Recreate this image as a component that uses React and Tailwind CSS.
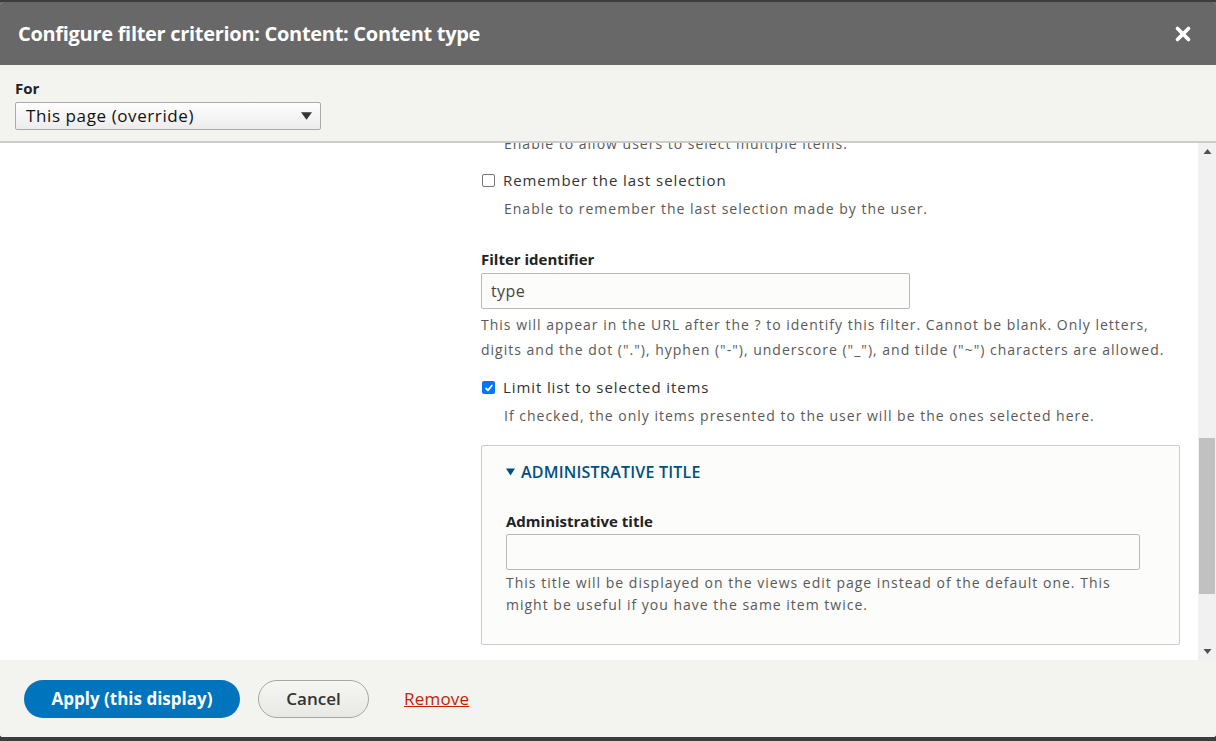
import { X } from 'lucide-react'

const font = { fontFamily: '"Open Sans", "Liberation Sans", sans-serif' }

function Checkbox({ checked }) {
  if (checked) {
    return (
      <span className="mt-[1px] flex h-[13px] w-[13px] shrink-0 items-center justify-center rounded-[2px] bg-[#0075ff]">
        <svg viewBox="0 0 12 12" className="h-[10px] w-[10px]" fill="none" stroke="white" strokeWidth="2.2" strokeLinecap="round" strokeLinejoin="round">
          <path d="M2.5 6.5l2.2 2.3L9.5 3" />
        </svg>
      </span>
    )
  }
  return <span className="mt-[1px] h-[13px] w-[13px] shrink-0 rounded-[2px] border border-[#767676] bg-white" />
}

function CheckItem({ checked, label, help }) {
  return (
    <div>
      <div className="flex items-center gap-[8px] pl-[1px] text-[15px] leading-[24px] tracking-[0.9px] text-[#333]">
        <Checkbox checked={checked} />
        <span>{label}</span>
      </div>
      <p className="mt-[7px] pl-[23px] text-[14px] leading-[20px] tracking-[1px] text-[#595959]">{help}</p>
    </div>
  )
}

export default function App() {
  return (
    <div className="h-[741px] w-[1216px] overflow-hidden bg-[#3d3d3d] pt-[2px]" style={font}>
      <div className="flex h-[735px] flex-col overflow-hidden rounded-[3px] bg-white">
        {/* header */}
        <div className="flex h-[63px] shrink-0 items-center justify-between bg-[#686868] pl-[18px] pr-[22px]">
          <h1 className="text-[20px] font-bold tracking-[-0.3px] text-white">Configure filter criterion: Content: Content type</h1>
          <X className="h-[22px] w-[22px] text-white" strokeWidth={4} />
        </div>

        {/* for */}
        <div className="h-[78px] shrink-0 border-b-[2px] border-[#ccc] bg-[#f3f3ef] px-[15px] pt-[12px]">
          <div className="text-[15px] font-bold leading-[22px] text-[#222]">For</div>
          <div className="mt-[3px] flex h-[28px] w-[306px] items-center justify-between rounded-[2px] border border-[#aaa] bg-gradient-to-b from-[#fefefe] to-[#ececec] pl-[10px] pr-[8px] text-[17px] tracking-[0.6px] text-[#111]">
            <span>This page (override)</span>
            <svg viewBox="0 0 10 7" className="h-[8px] w-[11px]">
              <path d="M0 0h10L5 7z" fill="#333" />
            </svg>
          </div>
        </div>

        {/* scroll area */}
        <div className="flex h-[517px] shrink-0">
          <div className="flex-1 overflow-hidden">
            <div className="-mt-[9px] flex">
              <div className="w-[481px] shrink-0" />
              <div className="w-[717px] pr-[18px]">
                <p className="pl-[23px] text-[14px] leading-[20px] tracking-[1px] text-[#595959]">Enable to allow users to select multiple items.</p>
                <div className="mt-[14px]">
                  <CheckItem label="Remember the last selection" help="Enable to remember the last selection made by the user." />
                </div>

                <div className="mt-[29px]">
                  <label className="block text-[15px] font-bold leading-[22px] text-[#222]">Filter identifier</label>
                  <div className="mt-[3px] flex h-[36px] w-[429px] items-center rounded-[2px] border border-[#b8b8b8] bg-[#fcfcfa] px-[9px] text-[16px] tracking-[0.4px] text-[#444]">type</div>
                  <p className="mt-[3px] pr-[10px] text-[14px] leading-[25px] tracking-[1px] text-[#595959]">
                    This will appear in the URL after the ? to identify this filter. Cannot be blank. Only letters, digits and the dot ("."), hyphen ("-"), underscore ("_"), and tilde ("~") characters are allowed.
                  </p>
                </div>

                <div className="mt-[13px]">
                  <CheckItem checked label="Limit list to selected items" help="If checked, the only items presented to the user will be the ones selected here." />
                </div>

                <div className="mt-[19px] h-[200px] rounded-[2px] border border-[#ccc] bg-[#fcfcfa] px-[24px] pt-[15px]">
                  <div className="flex items-center gap-[6px] text-[16px] font-semibold uppercase leading-[22px] tracking-[0.2px] text-[#004f80]">
                    <svg viewBox="0 0 10 8" className="h-[8px] w-[9px]">
                      <path d="M0 0h10L5 8z" fill="#004f80" />
                    </svg>
                    <span>Administrative title</span>
                  </div>
                  <label className="mt-[27px] block text-[15px] font-bold leading-[22px] text-[#222]">Administrative title</label>
                  <div className="mt-[2px] h-[36px] w-[634px] rounded-[2px] border border-[#b8b8b8] bg-[#fcfcfa]" />
                  <p className="mt-[2px] pr-[10px] text-[14px] leading-[22px] tracking-[1px] text-[#595959]">
                    This title will be displayed on the views edit page instead of the default one. This might be useful if you have the same item twice.
                  </p>
                </div>
              </div>
            </div>
          </div>
          {/* scrollbar */}
          <div className="flex w-[18px] shrink-0 flex-col items-center bg-[#f1f1f1] pb-[6px] pt-[6px]">
            <svg viewBox="0 0 8 5" className="h-[5px] w-[9px]">
              <path d="M4 0L8 5H0z" fill="#505050" />
            </svg>
            <div className="mt-[284px] h-[156px] w-[16px] bg-[#c1c1c1]" />
            <div className="flex-1" />
            <svg viewBox="0 0 8 5" className="h-[5px] w-[9px]">
              <path d="M0 0h8L4 5z" fill="#505050" />
            </svg>
          </div>
        </div>

        {/* footer */}
        <div className="flex flex-1 items-center gap-[18px] bg-[#f3f3ef] px-[24px]">
          <button className="h-[38px] w-[216px] rounded-full bg-[#0074bd] text-[17px] font-bold text-white">Apply (this display)</button>
          <button className="h-[38px] w-[111px] rounded-full border border-[#a6a6a6] bg-gradient-to-b from-[#f6f6f3] to-[#e8e8e4] text-[17px] font-semibold text-[#333]">Cancel</button>
          <a className="ml-[17px] text-[17px] tracking-[0.2px] text-[#c72100] underline">Remove</a>
        </div>
      </div>
    </div>
  )
}
